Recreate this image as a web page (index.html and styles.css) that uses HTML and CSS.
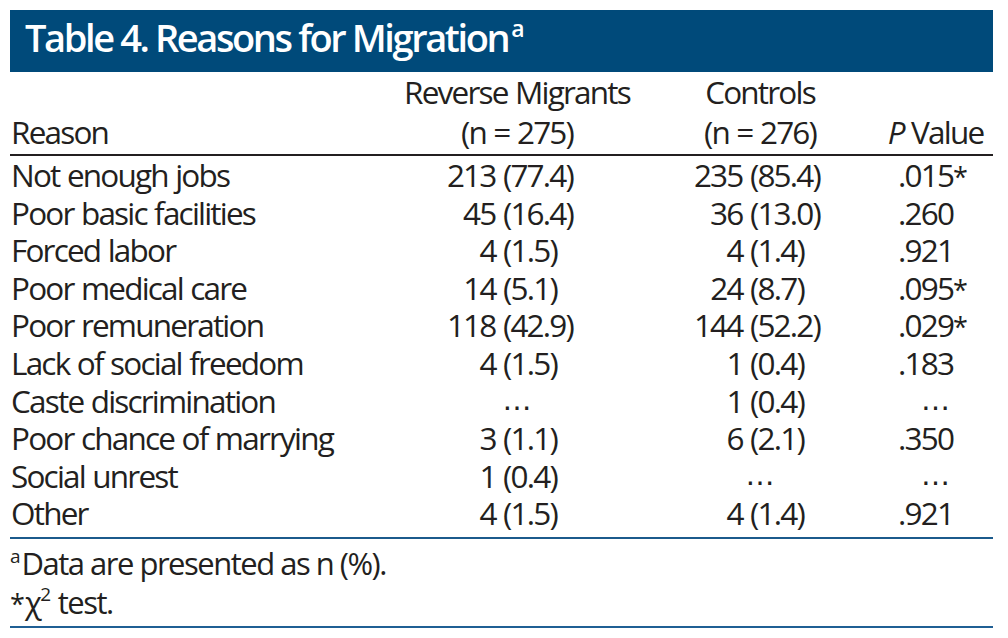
FILE: index.html
```html
<!DOCTYPE html>
<html lang="en">
<head>
<meta charset="utf-8">
<title>Table 4. Reasons for Migration</title>
<link rel="stylesheet" href="styles.css">
</head>
<body>
<div class="page">
  <div class="title-bar">
    <h1 class="title">Table 4. Reasons for Migration<span class="title-sup">a</span></h1>
  </div>
  <div class="tbl" role="table">
    <div class="head" role="row">
      <div class="h-reason" role="columnheader">Reason</div>
      <div class="h-num" role="columnheader">Reverse Migrants<br>(n = 275)</div>
      <div class="h-num" role="columnheader">Controls<br>(n = 276)</div>
      <div class="h-p" role="columnheader"><i>P</i> Value</div>
    </div>
    <div class="body">
      <div class="row" role="row"><div class="reason">Not enough jobs</div><div class="rev">213 (77.4)</div><div class="ctrl">235 (85.4)</div><div class="pv">.015<span class="ast">*</span></div></div>
      <div class="row" role="row"><div class="reason">Poor basic facilities</div><div class="rev">45 (16.4)</div><div class="ctrl">36 (13.0)</div><div class="pv">.260</div></div>
      <div class="row" role="row"><div class="reason">Forced labor</div><div class="rev one">4 (1.5)</div><div class="ctrl one">4 (1.4)</div><div class="pv">.921</div></div>
      <div class="row" role="row"><div class="reason">Poor medical care</div><div class="rev one">14 (5.1)</div><div class="ctrl one">24 (8.7)</div><div class="pv">.095<span class="ast">*</span></div></div>
      <div class="row" role="row"><div class="reason">Poor remuneration</div><div class="rev">118 (42.9)</div><div class="ctrl">144 (52.2)</div><div class="pv">.029<span class="ast">*</span></div></div>
      <div class="row" role="row"><div class="reason">Lack of social freedom</div><div class="rev one">4 (1.5)</div><div class="ctrl one">1 (0.4)</div><div class="pv">.183</div></div>
      <div class="row" role="row"><div class="reason">Caste discrimination</div><div class="dots">&#8230;</div><div class="ctrl one">1 (0.4)</div><div class="dots">&#8230;</div></div>
      <div class="row" role="row"><div class="reason">Poor chance of marrying</div><div class="rev one">3 (1.1)</div><div class="ctrl one">6 (2.1)</div><div class="pv">.350</div></div>
      <div class="row" role="row"><div class="reason">Social unrest</div><div class="rev one">1 (0.4)</div><div class="dots">&#8230;</div><div class="dots">&#8230;</div></div>
      <div class="row" role="row"><div class="reason">Other</div><div class="rev one">4 (1.5)</div><div class="ctrl one">4 (1.4)</div><div class="pv">.921</div></div>
    </div>
  </div>
  <div class="notes">
    <p class="note"><span class="note-sup">a</span>Data are presented as n (%).</p>
    <p class="note"><span class="note-ast">*</span>&#967;<span class="note-sup2">2</span> test.</p>
  </div>
</div>
</body>
</html>
```

FILE: styles.css
```css
html, body {
  margin: 0;
  padding: 0;
  background: #ffffff;
}

.page {
  width: 983px;
  margin: 10px 0 0 10px;
  font-family: "Open Sans", "Noto Sans", sans-serif;
  color: #231f20;
}

.title-bar {
  background: #004a7a;
  height: 62px;
  box-sizing: border-box;
  padding: 0 0 8px 15px;
}

.title {
  margin: 0;
  font-size: 38px;
  font-weight: 600;
  line-height: 54px;
  color: #ffffff;
  letter-spacing: -2.4px;
  white-space: nowrap;
}

.title-sup {
  font-size: 23px;
  letter-spacing: 0;
  position: relative;
  top: -15px;
  margin-left: 3px;
}

.tbl {
  font-size: 31.5px;
  letter-spacing: -1.8px;
  word-spacing: 1px;
}

.head,
.row {
  display: grid;
  grid-template-columns: 382px 250px 236px 115px;
}

.head {
  align-items: end;
  line-height: 40px;
  padding-bottom: 2px;
  border-bottom: 2px solid #231f20;
  white-space: nowrap;
}

.h-reason {
  padding-left: 1px;
}

.h-num,
.h-p {
  text-align: center;
}

.body {
  padding-bottom: 5px;
  border-bottom: 2px solid #1b5a8c;
}

.row {
  line-height: 37.6px;
  height: 37.6px;
  white-space: nowrap;
}

.reason {
  padding-left: 1px;
}

.rev {
  text-align: right;
  padding-right: 69px;
}

.ctrl {
  text-align: right;
  padding-right: 58px;
}

.rev.one {
  padding-right: 85px;
}

.ctrl.one {
  padding-right: 74px;
}

.pv {
  padding-left: 20px;
}

.dots {
  text-align: center;
  letter-spacing: 0;
  font-family: "DejaVu Sans", sans-serif;
  font-size: 29px;
}

.ast {
  font-size: 27px;
  letter-spacing: 0;
}

.notes {
  padding: 7px 0 2px 0;
  border-bottom: 2px solid #1f5f94;
  font-size: 31px;
  letter-spacing: -1.5px;
}

.note {
  margin: 0;
  line-height: 34px;
  white-space: nowrap;
}

.note-sup {
  font-size: 19px;
  letter-spacing: 0;
  position: relative;
  top: -12px;
  margin-right: 1px;
}

.note-ast {
  font-size: 27px;
  letter-spacing: 0;
}

.note-sup2 {
  font-size: 19px;
  letter-spacing: 0;
  position: relative;
  top: -13px;
}
```
